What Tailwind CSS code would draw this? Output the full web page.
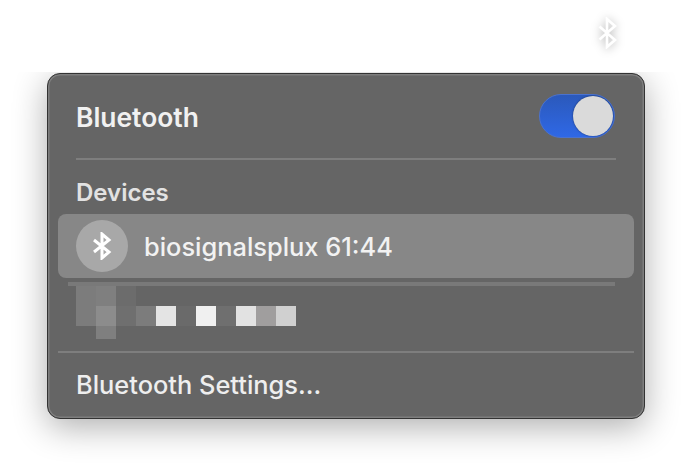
<!DOCTYPE html>
<html lang="en">
<head>
    <meta charset="UTF-8">
    <title>Bluetooth</title>
    <script src="https://cdn.jsdelivr.net/npm/@tailwindcss/browser@4"></script>
</head>
<body class="bg-white w-[692px] h-[474px] overflow-hidden font-['Inter','Liberation_Sans',sans-serif]">

    <!-- Menu bar -->
    <div class="h-[72px] flex justify-end pt-[17px] pr-[73px]">
        <svg class="w-[24px] h-[32px] drop-shadow-[0_1px_5px_rgba(0,0,0,0.3)]" viewBox="0 0 24 32" fill="none" stroke="#fff" stroke-width="2.6">
            <path d="M4.5 9.5 L20 23 L12 30 V2 L20 9 L4.5 22.5"/>
        </svg>
    </div>

    <!-- Shadow is cut off at the top edge -->
    <div class="h-[402px] overflow-hidden pt-px pl-[47px]">
        <div class="w-[598px] h-[346px] rounded-[13px] bg-[#656565] border border-[#333] shadow-[0_8px_34px_rgba(0,0,0,0.32),inset_0_0_0_1.5px_#7e7e7e] flex flex-col">

            <div class="h-[84px] shrink-0 pl-[28px] pr-[29px] flex items-center justify-between">
                <span class="text-[26.4px] leading-[32px] mt-[1px] font-semibold text-[#f1f1f1]">Bluetooth</span>
                <div class="w-[76px] h-[44px] rounded-full bg-gradient-to-b from-[#2b59bb] to-[#2f68e6] border border-[#4a72cf] flex items-center justify-end pr-[1px]">
                    <div class="w-[40px] h-[40px] rounded-full bg-[#dadada] shadow-[0_0_2px_rgba(0,0,0,0.5)]"></div>
                </div>
            </div>

            <div class="h-[2px] shrink-0 mx-[28px] bg-[#7e7e7e]"></div>

            <div class="h-[54px] shrink-0 pl-[28px] pt-[19px] text-[24px] leading-[28px] font-semibold text-[#e2e2e2]">Devices</div>

            <div class="h-[64px] shrink-0 mx-[10px] rounded-[8px] bg-[#878787] flex items-center pl-[18px] gap-[16px]">
                <div class="w-[52px] h-[52px] rounded-full bg-[#a8a8a8] flex items-center justify-center">
                    <svg class="w-[20px] h-[28px]" viewBox="0 0 20 28" fill="none" stroke="#fff" stroke-width="3">
                        <path d="M2 8 L17 20 L10 26 V2 L17 8 L2 20"/>
                    </svg>
                </div>
                <span class="text-[25.4px] leading-[32px] mt-[1px] font-[450] text-[#f2f2f2]">biosignalsplux 61:44</span>
            </div>

            <div class="h-[4px] shrink-0 mt-[4px] ml-[20px] mr-[29px] bg-[#797979]"></div>

            <!-- Blurred device name -->
            <div class="h-[65px] shrink-0 pl-[28px] flex flex-col">
                <div class="flex h-[20px]">
                    <div class="w-[20px] bg-[#7c7c7c]"></div>
                    <div class="w-[20px] bg-[#7f7f7f]"></div>
                    <div class="w-[20px] bg-[#6c6c6c]"></div>
                </div>
                <div class="flex h-[20px]">
                    <div class="w-[20px] bg-[#7c7c7c]"></div>
                    <div class="w-[20px] bg-[#8c8c8c]"></div>
                    <div class="w-[20px] bg-[#6f6f6f]"></div>
                    <div class="w-[20px] bg-[#7c7c7c]"></div>
                    <div class="w-[20px] bg-[#e4e4e4]"></div>
                    <div class="w-[20px] bg-[#6a6a6a]"></div>
                    <div class="w-[20px] bg-[#f0f0f0]"></div>
                    <div class="w-[20px] bg-[#6f6f6f]"></div>
                    <div class="w-[20px] bg-[#e2e2e2]"></div>
                    <div class="w-[20px] bg-[#a09e9e]"></div>
                    <div class="w-[20px] bg-[#d0d0d0]"></div>
                </div>
                <div class="h-[13px] w-[20px] ml-[20px] bg-[#7f7f7f]"></div>
            </div>

            <div class="h-[2px] shrink-0 mx-[10px] bg-[#7e7e7e]"></div>

            <div class="flex-1 pl-[28px] flex items-center text-[25.4px] font-[450] text-[#eeeeee]">Bluetooth Settings...</div>
        </div>
    </div>

</body>
</html>
